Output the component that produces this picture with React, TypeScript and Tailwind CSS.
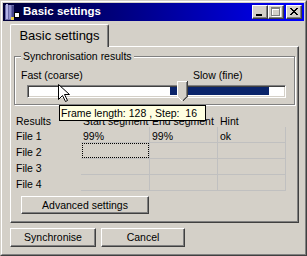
import React from 'react';

// Win2000-style "Basic settings" dialog

const GRID = 'border-r border-b border-[#c0c0c0]';

function PushButton({ label, className }: { label: string; className?: string }) {
  return (
    <div
      className={`flex items-center justify-center border border-t-white border-l-white border-r-[#404040] border-b-[#404040] bg-[#d4d0c8] shadow-[inset_-1px_-1px_0_#808080] text-[10.5px] leading-none text-black ${className ?? ''}`}
    >
      {label}
    </div>
  );
}

function CaptionButton({ children, className }: { children: React.ReactNode; className?: string }) {
  return (
    <div
      className={`h-[14px] w-[16px] border border-t-white border-l-white border-r-[#404040] border-b-[#404040] bg-[#d4d0c8] shadow-[inset_-1px_-1px_0_#808080] ${className ?? ''}`}
    >
      <svg width="14" height="12" viewBox="0 0 14 12" shapeRendering="crispEdges" className="block">
        {children}
      </svg>
    </div>
  );
}

const closeRows: [number, number][][] = [
  [[0, 2], [6, 2]],
  [[1, 2], [5, 2]],
  [[2, 4]],
  [[3, 2]],
  [[2, 4]],
  [[1, 2], [5, 2]],
  [[0, 2], [6, 2]],
];

function AppIcon() {
  return (
    <svg width="16" height="16" viewBox="0 0 16 16" shapeRendering="crispEdges" className="block shrink-0">
      <rect x="1" y="1" width="9" height="15" fill="#6a6aa8" />
      <rect x="2" y="0" width="2" height="15" fill="#b4b4e8" />
      <rect x="5" y="1" width="2" height="14" fill="#9090d0" />
      <rect x="8" y="2" width="2" height="13" fill="#46468a" />
      <rect x="10" y="8" width="5" height="5" fill="#ffffff" stroke="#000000" strokeWidth="1" />
      <rect x="7" y="13" width="3" height="3" fill="#e8d048" />
    </svg>
  );
}

function Cursor() {
  return (
    <svg width="13" height="20" viewBox="0 0 13 20" className="block">
      <path
        d="M0.5 0.5 L0.5 15.5 L4.5 11.5 L7.5 17.5 L9.5 16.5 L6.5 10.5 L11.5 10.5 Z"
        fill="#ffffff"
        stroke="#000000"
        strokeWidth="1"
        strokeLinejoin="miter"
      />
    </svg>
  );
}

function Thumb() {
  return (
    <svg width="11" height="21" viewBox="0 0 11 21" shapeRendering="crispEdges" className="block">
      <polygon points="0,0 11,0 11,16 6,21 5,21 0,16" fill="#d4d0c8" />
      <rect x="0" y="0" width="10" height="1" fill="#ffffff" />
      <rect x="0" y="0" width="1" height="16" fill="#ffffff" />
      <line x1="0.5" y1="15.5" x2="5.5" y2="20.5" stroke="#ffffff" strokeWidth="1" />
      <rect x="9" y="1" width="1" height="15" fill="#808080" />
      <line x1="9.5" y1="15.5" x2="5.5" y2="19.5" stroke="#808080" strokeWidth="1" />
      <rect x="10" y="0" width="1" height="16" fill="#404040" />
      <line x1="10.5" y1="15.5" x2="5.5" y2="20.5" stroke="#404040" strokeWidth="1" />
    </svg>
  );
}

const files = [
  { name: 'File 1', start: '99%', end: '99%', hint: 'ok' },
  { name: 'File 2', start: '', end: '', hint: '' },
  { name: 'File 3', start: '', end: '', hint: '' },
  { name: 'File 4', start: '', end: '', hint: '' },
];

export default function App() {
  return (
    <div className="relative h-[256px] w-[307px] overflow-hidden border border-t-[#d4d0c8] border-l-[#d4d0c8] border-r-[#404040] border-b-[#404040] bg-[#d4d0c8] font-['Liberation_Sans',Arial,sans-serif] text-black">
      <div className="flex h-full flex-col border border-t-white border-l-white border-r-[#808080] border-b-[#808080] p-[1px]">
        {/* Title bar */}
        <div className="flex h-[18px] items-center bg-linear-to-r from-[#000038] to-[#0000ff] pl-[1px] pr-[2px]">
          <AppIcon />
          <span className="ml-[3px] text-[11.5px] font-bold leading-none text-white">Basic settings</span>
          <div className="ml-auto flex">
            <CaptionButton>
              <rect x="3" y="8" width="6" height="2" fill="#000000" />
            </CaptionButton>
            <CaptionButton>
              <g fill="#ffffff" transform="translate(1 1)">
                <rect x="2" y="1" width="9" height="2" />
                <rect x="2" y="3" width="1" height="6" />
                <rect x="10" y="3" width="1" height="6" />
                <rect x="2" y="9" width="9" height="1" />
              </g>
              <g fill="#808080">
                <rect x="2" y="1" width="9" height="2" />
                <rect x="2" y="3" width="1" height="6" />
                <rect x="10" y="3" width="1" height="6" />
                <rect x="2" y="9" width="9" height="1" />
              </g>
            </CaptionButton>
            <CaptionButton className="ml-[2px]">
              <g fill="#000000" transform="translate(3 2)">
                {closeRows.map((row, y) =>
                  row.map(([x, w]) => <rect key={`${y}-${x}`} x={x} y={y} width={w} height="1" />)
                )}
              </g>
            </CaptionButton>
          </div>
        </div>

        {/* Body */}
        <div className="flex flex-col pl-[7px] pr-[5px] pt-[3px]">
          {/* Tab strip */}
          <div className="flex">
            <div className="relative z-10 -mb-[1px] flex h-[23px] w-[99px] items-center justify-center rounded-t-[2px] border-t border-l border-r border-t-white border-l-white border-r-[#404040] bg-[#d4d0c8] pb-[1px] shadow-[inset_-1px_0_0_#808080] text-[13px] leading-none">
              Basic settings
            </div>
          </div>

          {/* Tab panel */}
          <div className="flex h-[177px] flex-col border border-t-white border-l-white border-r-[#404040] border-b-[#404040] p-[3px] shadow-[inset_-1px_-1px_0_#808080]">
            <fieldset className="border border-[#808080] pb-[6px] pt-[7px] shadow-[inset_1px_1px_0_#ffffff,1px_1px_0_#ffffff]">
              <legend className="ml-[6px] h-[12px] bg-[#d4d0c8] px-[2px] text-[10.5px] leading-[12px]">
                Synchronisation results
              </legend>
              <div className="flex h-[12px] items-center pl-[6px] text-[10.5px] leading-[12px]">
                <span className="w-[172px]">Fast (coarse)</span>
                <span>Slow (fine)</span>
              </div>
              <div className="relative ml-[12px] mt-[4px] h-[13px] w-[259px] border border-t-[#808080] border-l-[#808080] border-r-white border-b-white bg-white shadow-[inset_1px_1px_0_#404040,inset_-1px_-1px_0_#d4d0c8]">
                <div className="absolute left-[142px] top-[1px] h-[8px] w-[99px] bg-[#0a246a]" />
                <div className="absolute left-[149px] top-[-5px] z-10">
                  <Thumb />
                </div>
              </div>
            </fieldset>

            {/* Results list */}
            <div className="mt-[6px] grid grid-cols-[67px_69px_68px_68px] text-[10.5px] leading-[16px]">
              <div className="h-[16px] pl-[2px] pt-[2px]">Results</div>
              <div className="h-[16px] whitespace-nowrap pl-[2px] pt-[2px]">Start segment</div>
              <div className="h-[16px] whitespace-nowrap pl-[2px] pt-[2px]">End segment</div>
              <div className="h-[16px] pl-[2px] pt-[2px]">Hint</div>
              {files.map((f, i) => (
                <React.Fragment key={f.name}>
                  <div className="h-[16px] pl-[2px] pt-[1px]">{f.name}</div>
                  <div className={`relative h-[16px] pl-[2px] pt-[1px] ${GRID}`}>
                    {f.start}
                    {i === 1 && <div className="absolute inset-y-0 left-[1px] right-0 border border-dotted border-black" />}
                  </div>
                  <div className={`h-[16px] pl-[2px] pt-[1px] ${GRID}`}>{f.end}</div>
                  <div className={`h-[16px] pl-[2px] pt-[1px] ${GRID}`}>{f.hint}</div>
                </React.Fragment>
              ))}
            </div>

            <PushButton label="Advanced settings" className="ml-[7px] mt-[5px] h-[18px] w-[128px]" />
          </div>

          {/* Dialog buttons */}
          <div className="mt-[5px] flex gap-[5px]">
            <PushButton label="Synchronise" className="h-[19px] w-[86px]" />
            <PushButton label="Cancel" className="h-[19px] w-[84px]" />
          </div>
        </div>
      </div>

      {/* Tooltip over the slider */}
      <div className="absolute left-[58px] top-[104px] z-20 h-[16px] w-[147px] whitespace-pre border border-black bg-[#ffffe1] pl-[1px] text-[10.5px] leading-[14px]">
        {'Frame length: 128 , Step:  16'}
      </div>

      {/* Mouse pointer */}
      <div className="absolute left-[57px] top-[83px] z-30">
        <Cursor />
      </div>
    </div>
  );
}
